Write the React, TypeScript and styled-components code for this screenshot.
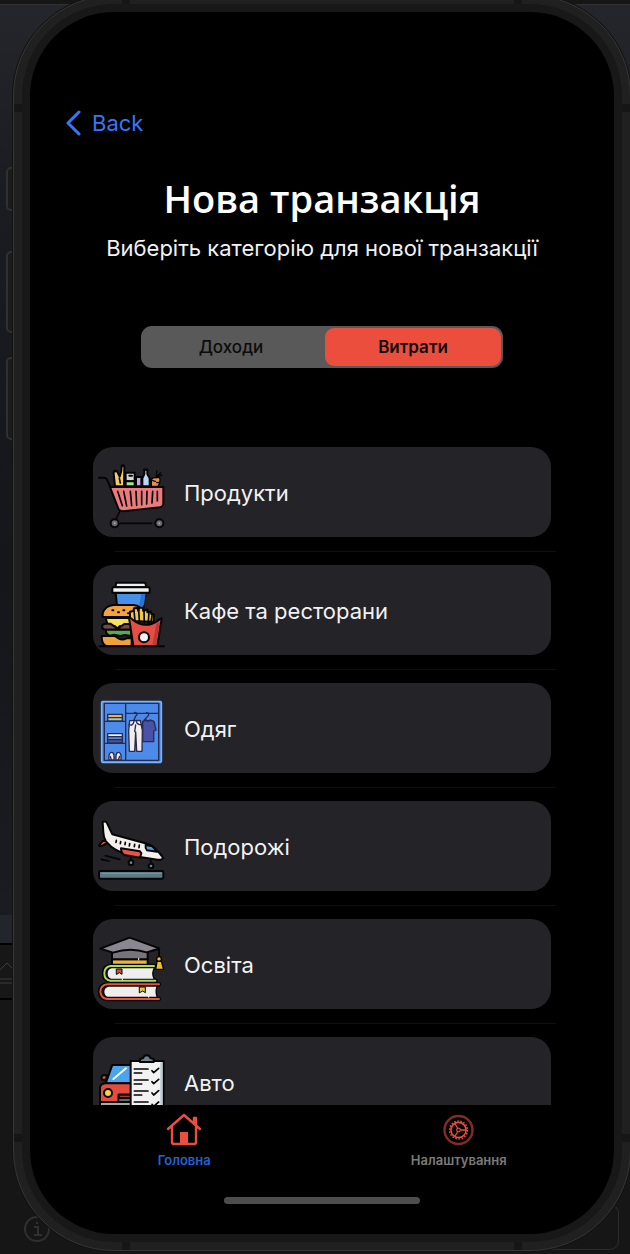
import React, { useState } from "react";
import styled, { createGlobalStyle } from "styled-components";

const GlobalStyle = createGlobalStyle`
  * { box-sizing: border-box; }
  body { margin: 0; background: #171717; }
  button { font: inherit; border: 0; padding: 0; background: none; cursor: pointer; }
`;

const red = "#eb4e3d";
const blue = "#3478f6";

const Desktop = styled.div`
  position: relative;
  isolation: isolate;
  display: flex;
  height: 100vh;
  min-height: 700px;
  overflow: hidden;
  background: #161616;
  color: #f2f2f2;
  font-family: Inter, "Liberation Sans", sans-serif;
`;

const EditorWindow = styled.div`
  position: absolute;
  z-index: -1;
  inset: 4px 0 auto;
  height: 941px;
  border-top: 1px solid #303030;
  border-bottom: 2px solid #000;
  background: linear-gradient(#25262c, #1b1c22 20%, #15161a 60%, #1b1c21 97%, #22252b 97%);
`;

const ConsoleBar = styled.div`
  position: absolute;
  z-index: -1;
  inset: 945px 0 auto;
  height: 55px;
  border-bottom: 2px solid #000;
  background: #171717;
`;

const InputOutline = styled.div`
  position: absolute;
  z-index: -1;
  right: 11px;
  bottom: 4px;
  width: 120px;
  height: 46px;
  border: 1px solid #2c2c2c;
  border-radius: 9px;
`;

const Backdrop = styled.svg<{ $top: number }>`
  position: absolute;
  z-index: -1;
  left: 0;
  top: ${(p) => p.$top}px;
`;

const SideButton = styled.span<{ $top: number; $length: number }>`
  position: absolute;
  z-index: -1;
  left: 6px;
  top: ${(p) => p.$top}px;
  width: 14px;
  height: ${(p) => p.$length}px;
  border: 2px solid #303030;
  border-radius: 5px;
  background: #1b1b1b;
`;

const Phone = styled.div`
  position: relative;
  flex: 1;
  display: flex;
  margin: -5px -1px 3px 13px;
  padding: 8px;
  border: 1px solid #363636;
  border-radius: 101px;
  background: #202020;
  box-shadow: 0 0 0 1px #131313;
`;

const Band = styled.span<{ $side: "left" | "right" | "top" | "bottom"; $end?: boolean }>`
  position: absolute;
  width: 8px;
  height: 8px;
  background: #161616;
  ${(p) => `${p.$side}: 0;`}
  ${(p) =>
    p.$side === "left" || p.$side === "right"
      ? `${p.$end ? "bottom" : "top"}: 108px;`
      : `${p.$end ? "right" : "left"}: 108px;`}
`;

const Bezel = styled.div`
  flex: 1;
  display: flex;
  min-width: 0;
  padding: 8px;
  border-radius: 92px;
  background: #181818;
`;

const Screen = styled.main`
  flex: 1;
  display: flex;
  flex-direction: column;
  min-width: 0;
  overflow: hidden;
  border-radius: 84px;
  background: #000;
`;

const NavBar = styled.nav`
  display: flex;
  padding: 96px 36px 0;
`;

const BackButton = styled.button`
  display: flex;
  align-items: center;
  gap: 11px;
  height: 30px;
  color: ${blue};
  font-size: 22px;
`;

const Heading = styled.header`
  padding: 32px 24px 0;
  text-align: center;
`;

const Title = styled.h1`
  margin: 0;
  font: 600 38px/56px "Open Sans", sans-serif;
  color: #fff;
`;

const Subtitle = styled.p`
  margin: 8px 0 0;
  font-size: 22px;
  line-height: 28px;
`;

const Segments = styled.div`
  align-self: center;
  display: grid;
  grid-template-columns: 1fr 1fr;
  gap: 6px;
  width: 62%;
  height: 42px;
  margin-top: 64px;
  padding: 2px;
  border-radius: 11px;
  background: #595959;
`;

const Segment = styled.button<{ $active: boolean }>`
  border-radius: 9px;
  background: ${(p) => (p.$active ? red : "transparent")};
  color: #0c0c0c;
  font-size: 17px;
  font-weight: ${(p) => (p.$active ? 600 : 500)};
`;

const CategoryList = styled.ul`
  flex: 1;
  min-height: 0;
  margin: 79px 58px 0 63px;
  padding: 0;
  overflow: hidden;
  list-style: none;
`;

const CategoryItem = styled.li`
  padding-bottom: 13px;

  &::after {
    content: "";
    display: block;
    height: 1px;
    margin: 14px 0 0 22px;
    background: #101010;
  }
`;

const CategoryCard = styled.button`
  display: flex;
  align-items: center;
  gap: 19px;
  width: calc(100% - 5px);
  height: 90px;
  padding: 2px 4px 0;
  border-radius: 20px;
  background: #242328;
  color: #f2f2f2;
  font-size: 22px;
  text-align: left;
`;

const Picture = styled.svg`
  flex: none;
  width: 68px;
  height: 68px;
  margin-top: 6px;
  overflow: visible;
  stroke: #050505;
  stroke-width: 6;
  stroke-linejoin: round;
  stroke-linecap: round;
`;

const TabBar = styled.nav`
  display: grid;
  grid-template-columns: 1fr 1fr;
  padding: 7px 18px 0 17px;
`;

const Tab = styled.button<{ $active?: boolean }>`
  display: flex;
  flex-direction: column;
  align-items: center;
  gap: 5px;
  color: ${(p) => (p.$active ? "#2463d2" : "#7b7b7b")};
  font-size: 13px;
  line-height: 16px;
  font-weight: 600;
`;

const HomeIndicator = styled.div`
  align-self: center;
  width: 196px;
  height: 7px;
  margin: 29px 0 30px;
  border-radius: 4px;
  background: #4d4d4d;
`;

const Groceries = () => (
  <Picture viewBox="21 63 204 204" fill="none" aria-hidden="true">
    <path d="M75 136 71 98q-1-8 4-9 5-1 8 6l6 12 5-18 1-13q4-5 8 0l-1 60z" fill="#f5cd65" />
    <path d="M95 76v-3h5v3M75 92v-2M88 112l3 14" strokeWidth="5" />
    <path d="M107 95h27v26h-27z" fill="#d5d9d5" />
    <path d="M107 121h27v15h-27z" fill="#a9e58b" />
    <path d="M118 104h8" />
    <path d="M138 108h16v28h-16z" fill="#c6a5e8" />
    <path d="M157 136v-24l6-13V86h9v13l7 13v24z" fill="#b8d9fb" />
    <path d="M163 86h9" strokeWidth="7" />
    <path d="M184 136v-18q2-8 10-8h15q4 10-5 26z" fill="#e99244" strokeWidth="4" />
    <path d="m199 110 1-20m0 17 12-12m-12 12 15-5m-27 17 8 2m4 4 7-1" strokeWidth="4" />
    <path d="M27 110h16q7 1 9 8l9 20" />
    <path d="M60 138h160v47q0 12-11 14l-110 12q-10 0-14-8z" fill="#ed7b7e" />
    <path d="m83 151 14 43m4-43 9 44m11-44 4 43m13-43 2 42m15-42v40m16-40-1 38m18-38-2 35m16-35v28" strokeWidth="5" />
    <path d="m89 211-12 26m8 10h100" strokeWidth="5" />
    <circle cx="74" cy="247" r="12" fill="#6b6570" /><circle cx="208" cy="247" r="12" fill="#6b6570" />
    <circle cx="74" cy="247" r="3" fill="#aaa" stroke="none" /><circle cx="208" cy="247" r="3" fill="#aaa" stroke="none" />
  </Picture>
);

const Cafe = () => (
  <Picture viewBox="21 57 204 204" fill="none" aria-hidden="true">
    <path d="m77 96 6 58h76l8-58z" fill="#4590e8" />
    <path d="m154 98-7 40 15-5 5-35z" fill="#2874cf" stroke="none" />
    <path d="M80 65h84q4 2 4 14H77q0-12 3-14z" fill="#e9eef2" />
    <path d="M69 79h106q4 0 4 4v12H67V83z" fill="#f2f2f2" />
    <path d="M38 168v-10q6-24 33-26h59q25 2 30 26v10z" fill="#f3a23e" />
    <path d="M67 148h3m14 6h3m13-6h3m11 9h3" />
    <path d="M47 171h76v24H54z" fill="#f6dc4d" />
    <path d="M36 197q0-8 10-9h15l22 15 20-14h20v17H47q-10 0-11-9z" fill="#74494a" />
    <path d="m56 175 26 23 26-23z" fill="#f9e35c" stroke="none" />
    <path d="M48 206h76v19l-20-3-13 3-18-4-13 3q-14-3-12-18z" fill="#58aa53" />
    <path d="M35 225h40q18 16 34 7h16v23H49q-14-4-14-30z" fill="#f2a13b" />
    <path d="M120 180v-28l10-2 2-8 11-1 2 9 3-10h10l2 10 12-5v9l10-3 2 8 7 1v22z" fill="#f3c747" />
    <path d="m132 149 4 42m10-43 3 45m13-44 1 44m14-39-3 39m12-29-4 24" strokeWidth="5" />
    <path d="m117 170 13 85h72l13-83q-7 2-10 6-39 28-77-2-3-6-11-6z" fill="#e64d43" />
    <path d="m199 188-12 63h12l10-68z" fill="#bd3938" stroke="none" />
    <circle cx="162" cy="229" r="15" fill="#f2f2f2" />
    <path d="M28 256h194" />
  </Picture>
);

const Clothes = () => (
  <Picture viewBox="21 54 204 204" fill="none" aria-hidden="true">
    <g stroke="#292a50" strokeWidth="4">
      <rect x="35" y="65" width="179" height="182" rx="3" fill="#427fe6" stroke="#75b6ff" strokeWidth="5" />
      <path d="M43 70h163v171H43zM107 70v171M43 124h64m-64 66h64m2-90h97" fill="#4d8bea" />
      <path d="M53 103h44v10H53z" fill="#efae54" /><path d="M53 113h44v10H53z" fill="#8bd6c0" />
      <path d="M53 161h44v9H53z" fill="#eee" /><path d="M53 170h44v9H53z" fill="#5c88c9" /><path d="M53 179h44v10H53z" fill="#4354a3" />
      <path d="M57 240v-14q2-9 8-9t7 10v13zm21 0v-13q1-10 7-10t8 9v14z" fill="#f1ece8" />
      <path d="m61 229 3 11m25-11-4 11" />
      <path d="m158 124 11-4q5 6 11 0l12 4 6 26-7 3v32h-33z" fill="#4951a8" />
      <path d="m119 122 32-1 6 30-1 63h-16l-3-58-3 58h-16l-2-61z" fill="#f1eeec" />
      <path d="M117 134q12 5 15-10m7 0q2 11 18 10m-23 21 3-20M132 120l5-12q7-4 2-9-4-4-6 1m30 20 9-10q7-6 2-11-4-3-6 1" />
    </g>
  </Picture>
);

const Travel = () => (
  <Picture viewBox="21 54 204 204" fill="none" aria-hidden="true">
    <path d="m27 143 11-14 19-1-5 7-19 10z" fill="#e95442" />
    <path d="M38 72q9-4 13 3l16 34 104 28q22 5 48 42-1 8-16 6l-78-12q-52-11-77-43-8-13-8-27z" fill="#f4f0ed" />
    <path d="m167 141 20 4 14 16-30-4q-6-7-4-16z" fill="#4b9de9" />
    <path d="m93 151 57 9 4 6-4 13-47-8q-10-6-10-20z" fill="#e95447" />
    <path d="m79 127-1 6m14-2-1 6m15-4-1 7m14-3-1 7m16-5-1 7m15-5-1 8M46 173l43 11m-55 0 23 5m65-11 2 15m58-8 1 17" strokeWidth="5" />
    <circle cx="123" cy="194" r="7" fill="#69858c" /><circle cx="183" cy="204" r="7" fill="#69858c" />
    <rect x="27" y="219" width="193" height="23" rx="4" fill="#5d7b86" />
    <path d="M37 226h177" stroke="#819aa2" strokeWidth="3" />
  </Picture>
);

const Education = () => (
  <Picture viewBox="21 52 204 204" fill="none" aria-hidden="true">
    <path d="M66 128h107v20H66z" fill="#edb42f" />
    <path d="M66 97h107v31H66z" fill="#77747e" />
    <path d="m31 96 88-33 89 32-38 12q-49-16-101 1z" fill="#8b8792" />
    <path d="M192 148H61q-19 2-19 22t18 22h137" stroke="#050505" strokeWidth="13" />
    <path d="M194 153H64q-13 3-13 18 0 13 12 17h130q-10-18 1-35z" fill="#eee" strokeWidth="4" />
    <path d="M192 148H61q-18 4-18 22 0 20 18 22h135" stroke="#b0d949" strokeWidth="6" />
    <path d="M207 203H53q-23 1-23 22 0 20 21 22h156" stroke="#050505" strokeWidth="13" />
    <path d="M202 208H55q-14 4-14 17 0 14 12 17h149q-7-18 0-34z" fill="#eee" strokeWidth="4" />
    <path d="M207 203H53q-21 2-22 22 2 20 20 22h156" stroke="#e55435" strokeWidth="6" />
    <path d="M80 157h16v16l-8-5-8 5z" fill="#dc4931" strokeWidth="3" />
    <path d="M149 211h17v17l-8-5-9 5z" fill="#f0c13b" strokeWidth="3" />
    <path d="m190 102 17-6v30" />
    <circle cx="207" cy="127" r="7" fill="#f1bd31" strokeWidth="4" /><path d="m201 134-4 24h24l-7-24z" fill="#f1bd31" strokeWidth="4" />
    <path d="M146 125v5m-49 56v4m79 48v4" stroke="#fff" strokeWidth="3" />
  </Picture>
);

const Car = () => (
  <Picture viewBox="21 64 204 204" fill="none" aria-hidden="true">
    <path d="m47 158 20-55h60v55z" fill="#4aa5ed" />
    <path d="m70 145 38-32" stroke="#f5f5f5" />
    <path d="M48 147H36q-4-10 3-13h12z" fill="#e64c3c" />
    <path d="M30 215v-45q2-10 15-12h83v57z" fill="#e64c3c" />
    <path d="M30 214h94v36H40q-10 0-10-10z" fill="#aaa" />
    <circle cx="54" cy="187" r="12" fill="#f5d643" />
    <path d="M86 212v-20h40M89 202h35" strokeWidth="7" /><path d="M90 208h34" stroke="#596e78" />
    <path d="M122 91h99v180h-99z" fill="#f2f2f2" />
    <path d="M211 95h6v172h-6z" fill="#b9cbd4" stroke="none" />
    <path d="M150 94v-9l10-3q1-8 10-8t11 8l10 3v9z" fill="#71818a" />
    <path d="M133 115h41m-41 12h22m-22 21h41m-41 12h22m-22 21h41m-41 12h22m-22 21h41m-41 12h22m31-106 5 6 15-13m-20 40 5 6 15-13m-20 41 5 6 15-13m-20 41 5 6 15-13" strokeWidth="5" />
  </Picture>
);

const categories: [string, () => React.ReactElement][] = [
  ["Продукти", Groceries],
  ["Кафе та ресторани", Cafe],
  ["Одяг", Clothes],
  ["Подорожі", Travel],
  ["Освіта", Education],
  ["Авто", Car],
];

const HomeIcon = () => (
  <svg width="36" height="35" viewBox="0 0 36 35" fill="none" stroke={red} strokeWidth="2.4" strokeLinecap="round" strokeLinejoin="round" aria-hidden="true">
    <path d="M2 17 18 3l16 14M6 14v16q0 2 2 2h20q2 0 2-2V14M28 11V6h2v7" />
    <path d="M14 20h8v12h-8z" fill={red} stroke="none" />
  </svg>
);

const GearIcon = () => (
  <svg width="35" height="35" viewBox="0 0 35 35" fill="none" stroke={red} aria-hidden="true">
    <circle cx="17.5" cy="18" r="14" stroke="#842c23" strokeWidth="2.4" />
    <circle cx="17.5" cy="18" r="7.6" strokeWidth="1.6" />
    <circle cx="17.5" cy="18" r="9" strokeWidth="1.4" strokeDasharray="1.57 1.57" />
    <circle cx="17.5" cy="18" r="1.8" strokeWidth="1.2" />
    <path d="M19.5 18h6m-9-2-3-5m3 9-3 5" strokeWidth="1.3" />
  </svg>
);

export default function App() {
  const [segment, setSegment] = useState("Витрати");
  return (
    <Desktop>
      <GlobalStyle />
      <EditorWindow />
      <ConsoleBar />
      <Backdrop $top={958} width="14" height="30" fill="none" stroke="#3d3d3d" aria-hidden="true">
        <path d="m0 12 7-7 7 7M0 21h14M0 25h14" />
      </Backdrop>
      <Backdrop $top={1214} width="60" height="30" fill="none" stroke="#303030" strokeWidth="2" aria-hidden="true">
        <circle cx="37" cy="15" r="12" />
        <path d="M34 13h4v8m-4 0h8M37 8v2" />
      </Backdrop>
      <InputOutline />
      <SideButton $top={167} $length={44} />
      <SideButton $top={251} $length={82} />
      <SideButton $top={357} $length={83} />
      <Phone>
        <Band $side="left" /><Band $side="left" $end />
        <Band $side="right" /><Band $side="right" $end />
        <Band $side="top" /><Band $side="top" $end />
        <Band $side="bottom" /><Band $side="bottom" $end />
        <Bezel>
          <Screen>
            <NavBar>
              <BackButton>
                <svg width="15" height="26" viewBox="0 0 15 26" fill="none" stroke="currentColor" strokeWidth="3" strokeLinecap="round" strokeLinejoin="round" aria-hidden="true">
                  <path d="M13 2 2 13l11 11" />
                </svg>
                Back
              </BackButton>
            </NavBar>
            <Heading>
              <Title>Нова транзакція</Title>
              <Subtitle>Виберіть категорію для нової транзакції</Subtitle>
            </Heading>
            <Segments>
              {["Доходи", "Витрати"].map((name) => (
                <Segment key={name} $active={segment === name} aria-pressed={segment === name} onClick={() => setSegment(name)}>
                  {name}
                </Segment>
              ))}
            </Segments>
            <CategoryList>
              {categories.map(([name, Icon]) => (
                <CategoryItem key={name}>
                  <CategoryCard>
                    <Icon />
                    {name}
                  </CategoryCard>
                </CategoryItem>
              ))}
            </CategoryList>
            <TabBar>
              <Tab $active><HomeIcon />Головна</Tab>
              <Tab><GearIcon />Налаштування</Tab>
            </TabBar>
            <HomeIndicator />
          </Screen>
        </Bezel>
      </Phone>
    </Desktop>
  );
}
